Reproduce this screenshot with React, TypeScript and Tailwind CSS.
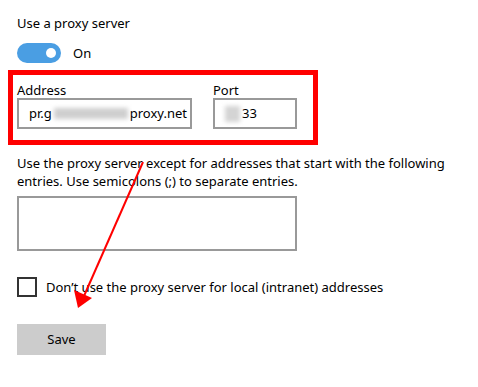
export default function App() {
  return (
    <div className="relative w-[478px] h-[387px] overflow-hidden bg-white text-black font-['Noto_Sans','Open_Sans',sans-serif] text-[13px]">
      <div className="flex flex-col pl-[17px] pt-[14px]">
        <p className="leading-[18px]">Use a proxy server</p>

        {/* toggle */}
        <div className="mt-[11px] flex items-center gap-[12px] h-[20px]">
          <div className="w-[44px] h-[20px] rounded-full bg-[#4a9ee3] flex items-center justify-end pr-[5px]">
            <div className="w-[10px] h-[10px] rounded-full bg-white"></div>
          </div>
          <span className="leading-[20px]">On</span>
        </div>

        {/* highlighted address/port group */}
        <div className="-ml-[9px] mt-[7px] w-[310px] h-[75px] border-[5px] border-[#ff0000] pl-[4px] pt-[6px] flex gap-[21px]">
          <div className="flex flex-col">
            <span className="leading-[18px]">Address</span>
            <div className="mt-[-1px] w-[175px] h-[31px] border-2 border-[#999999] flex items-center pl-[10px]">
              <span>pr.g</span>
              <span className="w-[74px] h-[11px] bg-[#cfcfcf] blur-[2px] mx-[2px]"></span>
              <span>proxy.net</span>
            </div>
          </div>
          <div className="flex flex-col">
            <span className="leading-[18px]">Port</span>
            <div className="mt-[-1px] w-[84px] h-[31px] border-2 border-[#999999] flex items-center pl-[10px]">
              <span className="w-[15px] h-[16px] bg-[#d4d4d4] blur-[2px] mr-[2px]"></span>
              <span>33</span>
            </div>
          </div>
        </div>

        <p className="mt-[9px] leading-[18px]">
          Use the proxy server except for addresses that start with the following
          <br />
          entries. Use semicolons (;) to separate entries.
        </p>

        <div className="mt-[6px] w-[280px] h-[55px] border-2 border-[#999999]"></div>

        <div className="mt-[26px] flex items-center gap-[9px]">
          <div className="w-[20px] h-[20px] border-2 border-[#333333]"></div>
          <span className="leading-[20px]">Don’t use the proxy server for local (intranet) addresses</span>
        </div>

        <button className="mt-[27px] w-[89px] h-[31px] bg-[#cccccc] text-[13px]">Save</button>
      </div>

      {/* annotation arrow */}
      <svg className="absolute left-0 top-0" width="478" height="387">
        <line x1="143" y1="162" x2="84" y2="296" stroke="#ff0000" strokeWidth="2" />
        <polygon points="78,308 74,290 92,298" fill="#ff0000" />
      </svg>
    </div>
  );
}
